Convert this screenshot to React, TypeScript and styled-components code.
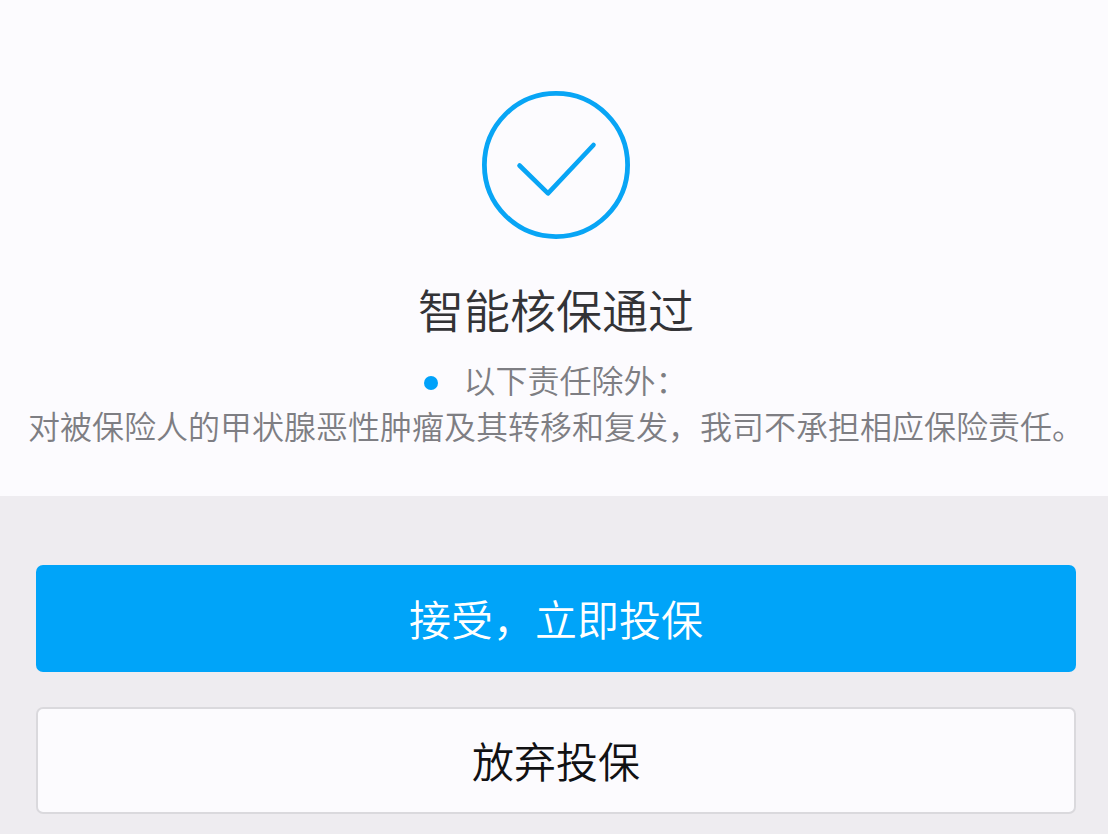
import React from "react";
import styled, { createGlobalStyle } from "styled-components";

const GlobalStyle = createGlobalStyle`
  * { box-sizing: border-box; }
  body {
    margin: 0;
    background: #eeecf0;
    font-family: "Noto Sans CJK SC", sans-serif;
    font-weight: 350;
  }
`;

const Page = styled.main`
  display: flex;
  flex-direction: column;
`;

const Result = styled.section`
  display: flex;
  flex-direction: column;
  align-items: center;
  padding: 91px 22px 48px 26px;
  background: #fcfbfe;
  text-align: center;
`;

const StatusIcon = styled.svg`
  display: block;
  width: 148px;
  height: 148px;
`;

const Title = styled.h1`
  margin: 35px 0 14px;
  color: #333336;
  font-size: 46px;
  line-height: 68px;
  font-weight: 350;
`;

const Exclusions = styled.ul`
  margin: 0;
  padding: 0;
  list-style: none;
`;

const ExclusionItem = styled.li`
  display: flex;
  align-items: center;
  justify-content: center;
  gap: 25px;
  color: #7e7e83;
  font-size: 32px;
  line-height: 46px;

  &::before {
    content: "";
    width: 14px;
    height: 14px;
    margin-top: 8px;
    border-radius: 50%;
    background: #00a2fa;
  }
`;

const Detail = styled.p`
  margin: 0;
  color: #7e7e83;
  font-size: 32px;
  line-height: 46px;
`;

const Actions = styled.section`
  display: flex;
  flex-direction: column;
  gap: 35px;
  padding: 69px 32px 20px 36px;
`;

const ActionButton = styled.button<{ $primary?: boolean }>`
  width: 100%;
  height: 107px;
  padding: 0 0 2px;
  border: ${(p) => (p.$primary ? "0" : "2px solid #dad9dd")};
  border-radius: 7px;
  background: ${(p) => (p.$primary ? "#00a4f9" : "#fcfbfe")};
  color: ${(p) => (p.$primary ? "#ffffff" : "#111113")};
  font-family: inherit;
  font-size: 42px;
  font-weight: 350;
  line-height: 60px;
  cursor: pointer;
`;

export default function App() {
  return (
    <>
      <GlobalStyle />
      <Page lang="zh-CN">
        <Result>
          <StatusIcon viewBox="0 0 148 148" fill="none" stroke="#08a5f5" aria-hidden="true">
            <circle cx="74" cy="74" r="71.6" strokeWidth="4.8" />
            <path d="M37.5 74.5 66 102.3 111.5 54" strokeWidth="4.6" strokeLinecap="round" strokeLinejoin="round" />
          </StatusIcon>
          <Title>智能核保通过</Title>
          <Exclusions>
            <ExclusionItem>以下责任除外：</ExclusionItem>
          </Exclusions>
          <Detail>对被保险人的甲状腺恶性肿瘤及其转移和复发，我司不承担相应保险责任。</Detail>
        </Result>
        <Actions>
          <ActionButton type="button" $primary>接受，立即投保</ActionButton>
          <ActionButton type="button">放弃投保</ActionButton>
        </Actions>
      </Page>
    </>
  );
}
